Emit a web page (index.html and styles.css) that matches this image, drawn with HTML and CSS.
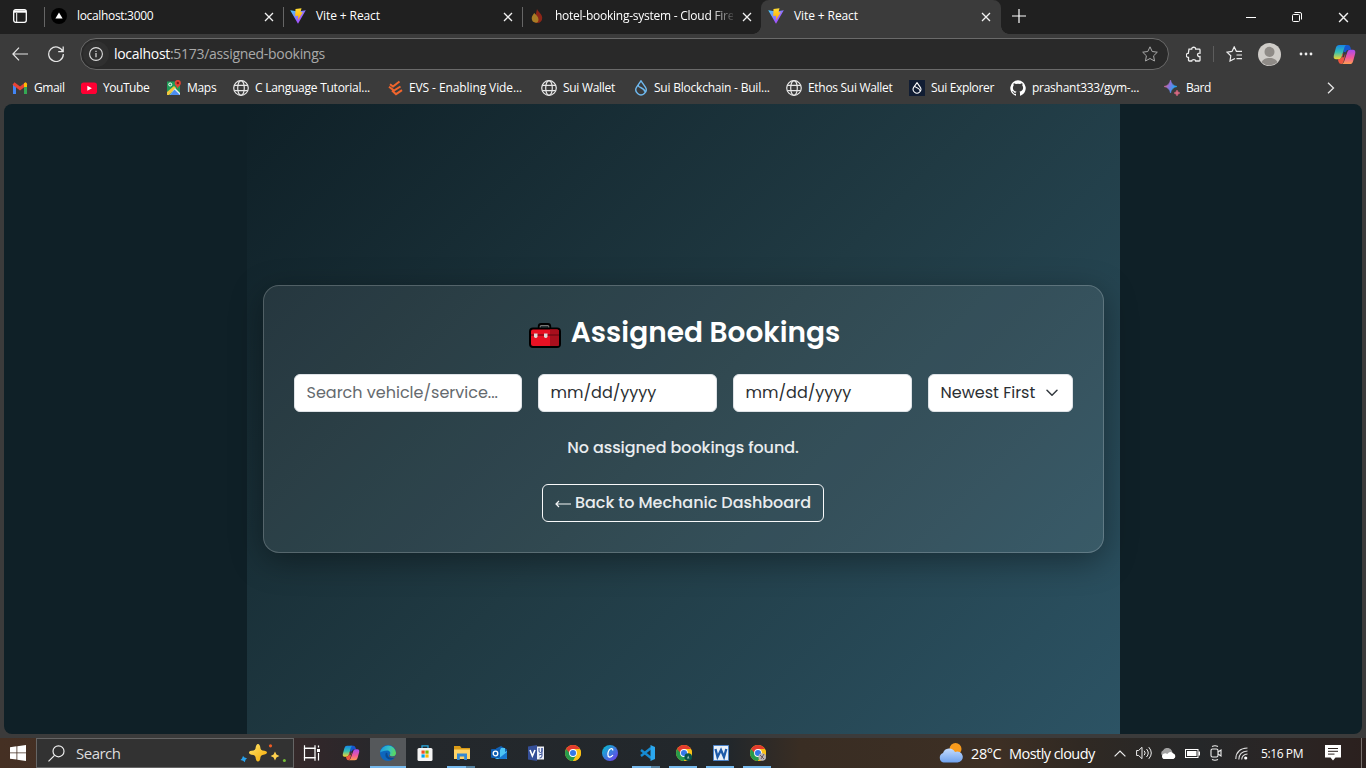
FILE: index.html
```html
<!DOCTYPE html>
<html lang="en">
<head>
<meta charset="utf-8">
<title>Vite + React</title>
<link rel="stylesheet" href="styles.css">
</head>
<body>
<svg class="defs" aria-hidden="true">
  <defs>
    <linearGradient id="vp" x1="0" y1="0" x2="1" y2="1"><stop offset="0" stop-color="#41d1ff"/><stop offset=".6" stop-color="#9a60ff"/><stop offset="1" stop-color="#bd34fe"/></linearGradient>
    <linearGradient id="vy" x1="0" y1="0" x2="0" y2="1"><stop offset="0" stop-color="#ffdd35"/><stop offset="1" stop-color="#ffa800"/></linearGradient>
    <linearGradient id="cpl" x1="0" y1="0" x2="0" y2="1"><stop offset="0" stop-color="#1686e8"/><stop offset=".5" stop-color="#35c0b2"/><stop offset="1" stop-color="#f4d52e"/></linearGradient>
    <linearGradient id="cpr" x1="0" y1="0" x2="0" y2="1"><stop offset="0" stop-color="#a64bf0"/><stop offset=".55" stop-color="#f2589b"/><stop offset="1" stop-color="#ff9e50"/></linearGradient>
    <linearGradient id="edge" x1="0" y1="1" x2="1" y2="0"><stop offset="0" stop-color="#0c59a4"/><stop offset=".5" stop-color="#1ba0dd"/><stop offset="1" stop-color="#62dd55"/></linearGradient>
    <linearGradient id="edge2" x1="0" y1=".3" x2="1" y2=".5"><stop offset="0" stop-color="#1b98e0"/><stop offset=".55" stop-color="#35c1c4"/><stop offset="1" stop-color="#5fdb57"/></linearGradient>
    <linearGradient id="bard" x1="0" y1=".3" x2="1" y2=".7"><stop offset="0" stop-color="#e8637b"/><stop offset=".4" stop-color="#8a72dd"/><stop offset=".8" stop-color="#25a5f5"/></linearGradient>
    <linearGradient id="canva" x1="0" y1="0" x2="1" y2="1"><stop offset="0" stop-color="#00c4cc"/><stop offset="1" stop-color="#7434ee"/></linearGradient>
    <linearGradient id="cloud" x1="0" y1="0" x2="0" y2="1"><stop offset="0" stop-color="#c4dcff"/><stop offset="1" stop-color="#6fa2ee"/></linearGradient>
    <linearGradient id="star" x1="0" y1="0" x2="1" y2="1"><stop offset="0" stop-color="#ffe66e"/><stop offset="1" stop-color="#f5a800"/></linearGradient>
  </defs>
  <symbol id="vite" viewBox="0 0 16 16"><path fill="url(#vp)" d="M.2 2.200 8 15.800 15.800 2.200 8 3.600z"/><path fill="url(#vy)" d="M5.500 1 11.500.2 10.500 4.200h2.300L8 12l.2-4.300-3 .4z"/></symbol>
  <symbol id="x" viewBox="0 0 10 10"><path d="m1 1 8 8M9 1 1 9" fill="none" stroke="#f1f1f1" stroke-width="1.3"/></symbol>
  <symbol id="globe" viewBox="0 0 16 16"><g fill="none" stroke="#e6e6e6" stroke-width="1.2"><circle cx="8" cy="8" r="7.300"/><ellipse cx="8" cy="8" rx="3.300" ry="7.300"/><path d="M1.300 5.300h13.400M1.300 10.700h13.400"/></g></symbol>
  <symbol id="drop" viewBox="0 0 16 16"><path d="M8 .8 12.200 6.800a5.100 5.100 0 1 1-8.400 0zM5.100 5.300c.5 3 6.300 2 6.700 6.300" fill="none" stroke="currentColor" stroke-width="1.400"/></symbol>
  <symbol id="copilot" viewBox="0 0 24 22">
    <path fill="#1557d0" d="M11 1h4.500q2 0 2.700 2.300L19 6h-2q-3 0-3.800 2.500L11 14z"/>
    <path fill="url(#cpl)" d="M6.500 1H14q-1.500.5-2 2.500L9 13.500Q8.300 16 6 16H3.200Q0 16 .8 12L3 4q.8-3 3.500-3z"/>
    <path fill="#ee5540" d="M6 16q2.300 0 3-2.500l1-3.500 3 1-2 7.500q-.8 2.500-2.500 2.500-2 0-2.700-2.200L5 16z"/>
    <path fill="url(#cpr)" d="M18 6h2.800Q24 6 23.200 10L21 18q-.8 3-3.500 3H8.500q2.200 0 3-2.500L15 8.500Q15.700 6 18 6z"/>
    <path fill="#3b3b3b" d="M11.200 8.500h2L11.500 14H9.600z"/>
  </symbol>
  <symbol id="chrome" viewBox="0 0 16 16"><circle cx="8" cy="8" r="8" fill="#fbc116"/><path fill="#e33b2e" d="M1.100 4A8 8 0 0 1 14.900 4H8L4.500 9.900z"/><path fill="#279a4b" d="M1.100 4A8 8 0 0 0 8 16l3.500-6L8 8H4.500z"/><path fill="#fbc116" d="M14.930 4H8l3.500 6L8 16A8 8 0 0 0 14.930 4z"/><circle cx="8" cy="8" r="3.900" fill="#fff"/><circle cx="8" cy="8" r="3.050" fill="#3478e8"/></symbol>
</svg>

<div class="tabs">
  <div class="workspace"><svg width="14" height="14" viewBox="0 0 14 14"><rect x=".7" y=".7" width="12.600" height="12.600" rx="2" fill="none" stroke="#fff" stroke-width="1.300"/><path d="M1 2.500h12" stroke="#fff" stroke-width="2.400"/><path d="M3.700 4v9" stroke="#fff"/></svg></div>
  <div class="tab t1"><svg width="16" height="16" viewBox="0 0 16 16"><circle cx="8" cy="8" r="8"/><path fill="#fff" d="m8 4.400 3.600 6.200H4.400z"/></svg><span class="tt">localhost:3000</span><svg class="close"><use href="#x"/></svg></div>
  <div class="tab t2"><svg width="16" height="16"><use href="#vite"/></svg><span class="tt">Vite + React</span><svg class="close"><use href="#x"/></svg></div>
  <div class="tab t3"><svg width="16" height="16" viewBox="0 0 16 16"><path fill="#8c2618" d="M8 1c1 3 5 5 5.200 8.500A5 5 0 0 1 8 15c-3-.4-4-3-2.400-5.500C6.800 7 7.200 4.500 8 1z"/><path fill="#a97c25" d="M5.200 5c2 2 4.300 3.500 4.300 6.500 0 2-1 3.300-2.500 3.300a4.600 4.600 0 0 1-4.300-4.500C2.700 8 4.200 7 5.200 5z"/></svg><span class="tt fade">hotel-booking-system - Cloud Fire</span><svg class="close"><use href="#x"/></svg></div>
  <div class="tab t4 active"><svg width="16" height="16"><use href="#vite"/></svg><span class="tt">Vite + React</span><svg class="close"><use href="#x"/></svg></div>
  <svg class="plus" viewBox="0 0 14 14"><path d="M7 0v14M0 7h14" stroke="#fff" stroke-width="1.200"/></svg>
  <div class="win">
    <svg width="10" height="12" viewBox="0 0 10 12"><path d="M0 6.500h10" stroke="#fff"/></svg>
    <svg width="10" height="10" viewBox="0 0 10 10"><g fill="none" stroke="#fff"><rect x=".5" y="2.500" width="7" height="7" rx="1"/><path d="M2.500.5H8q1.500 0 1.500 1.500v5.500"/></g></svg>
    <svg width="11" height="11"><use href="#x"/></svg>
  </div>
</div>

<div class="toolbar">
  <svg class="back" viewBox="0 0 16 14"><path d="M16 7H1M7 .7.900 7 7 13.300" fill="none" stroke="#e6e6e6" stroke-width="1.200"/></svg>
  <svg class="reload" viewBox="0 0 16 16"><path d="M14.800 5.500A7.300 7.300 0 1 0 15.300 8M15.200.6v5h-5" fill="none" stroke="#e6e6e6" stroke-width="1.250"/></svg>
  <div class="address">
    <span class="info"><svg width="14" height="14" viewBox="0 0 14 14"><circle cx="7" cy="7" r="6.400" fill="none" stroke="#ddd" stroke-width="1.100"/><path d="M7 6v4.200M7 3.700v1.300" stroke="#ddd" stroke-width="1.200"/></svg></span>
    <span class="url"><b>localhost</b>:5173/assigned-bookings</span>
    <svg class="fav" viewBox="0 0 16 16"><path d="m8 .8 2.200 4.700 5.100.7-3.700 3.600.9 5.200L8 12.500 3.500 15l.9-5.200L.7 6.200l5.100-.7z" fill="none" stroke="#aaa"/></svg>
  </div>
  <svg class="ext" viewBox="0 0 16 17"><path d="M3 3.200h2.700C5.400.6 10 .6 9.700 3.200h3.500q.8 0 .8.800v3.200c-3.300-.5-3.300 3.800 0 3.300v3.700q0 .8-.8.800H9.700c0-1.800-4-1.800-4 0H3.500q-1 0-1-.8v-2.700C-.4 11.800-.4 7 2.300 7.300z" fill="none" stroke="#eee" stroke-width="1.300"/></svg>
  <i class="sep"></i>
  <svg class="favs" viewBox="0 0 17 16"><path d="M9 12.500 4 15l.8-5.200L1 6.200l5-.8L8.200.9l2.200 4.400H16M10.500 9H16M10.500 12.600H16" fill="none" stroke="#eee" stroke-width="1.200"/></svg>
  <svg class="avatar" viewBox="0 0 22 22"><circle cx="11" cy="11" r="11" fill="#cfccc8"/><circle cx="11" cy="8.500" r="4.800" fill="#8f8b87"/><path d="M3.500 18.500C5 13 17 13 18.500 18.500A11 11 0 0 1 3.500 18.500z" fill="#8f8b87"/></svg>
  <svg class="dots" viewBox="0 0 14 4"><g fill="#eee"><circle cx="2" cy="2" r="1.400"/><circle cx="7" cy="2" r="1.400"/><circle cx="12" cy="2" r="1.400"/></g></svg>
  <svg class="cop"><use href="#copilot"/></svg>
</div>

<div class="bookmarks">
  <span class="bm b1"><svg viewBox="0 0 16 16"><path d="M2.500 14V4.500" stroke="#4285f4" stroke-width="3"/><path d="M13.500 14V4.500" stroke="#34a853" stroke-width="3"/><path d="m1.500 3.500 6.500 5 6.500-5" fill="none" stroke="#ea4335" stroke-width="3.200"/><path d="M12 5.500V3.200c1-1 3-.8 3 1V7H12z" fill="#fbbc04"/></svg>Gmail</span>
  <span class="bm b2"><svg viewBox="0 0 16 16"><rect y="2.500" width="16" height="11.500" rx="2.800" fill="#ff0033"/><path fill="#fff" d="m6.300 5.800 4.600 2.500-4.600 2.500z"/></svg>YouTube</span>
  <span class="bm b3"><svg viewBox="0 0 16 16"><path fill="#1e9b57" d="M1 1.500h13V15H1z"/><path fill="#f2c73d" d="M1 12 8 6l2 2-7 7H1z"/><path fill="#e7edf2" d="m9 8 5 5v2H4z"/><path fill="#4b8ef1" d="m8.500 9.500 5.500 5.500H4z"/><circle cx="4.200" cy="4.500" r="1.500" fill="none" stroke="#fff"/><path fill="#e04434" d="M11.700 9C11.500 6.500 8.700 5.600 8.700 3a3 3 0 0 1 6.200 0c0 2.600-3 3.500-3.200 6z"/><circle cx="11.800" cy="3" r="1.200" fill="#7b1713"/></svg>Maps</span>
  <span class="bm b4"><svg><use href="#globe"/></svg>C Language Tutorial...</span>
  <span class="bm b5"><svg viewBox="0 0 16 16"><path fill="none" stroke="#f1652d" stroke-width="2" d="M11.500 1.500 5 6.500 2 4.200M1 6.800 6 10.500l6.500-4M4 10.500l4 3.700 6-4"/></svg>EVS - Enabling Vide...</span>
  <span class="bm b6"><svg><use href="#globe"/></svg>Sui Wallet</span>
  <span class="bm b7 blue"><svg><use href="#drop"/></svg><em>Sui Blockchain - Buil...</em></span>
  <span class="bm b8"><svg><use href="#globe"/></svg>Ethos Sui Wallet</span>
  <span class="bm b9"><svg viewBox="0 0 16 16"><path fill="#111d33" d="M0 0h16v16H0z"/><use href="#drop" x="2" y="1.500" width="12" height="13"/></svg>Sui Explorer</span>
  <span class="bm b10"><svg viewBox="0 0 16 16"><path fill="#fff" d="M8 .2a8 8 0 0 0-2.500 15.500c.4 0 .5-.2.500-.4v-1.500c-2.200.5-2.700-1-2.700-1-.4-.9-.9-1.200-.9-1.200-.7-.5.1-.5.100-.5.800.1 1.200.8 1.200.8.700 1.200 1.900.9 2.300.7.100-.5.300-.9.500-1.100-1.800-.2-3.600-.9-3.600-4 0-.9.300-1.600.8-2.100-.1-.2-.4-1 .1-2.100 0 0 .7-.2 2.200.8a7.500 7.500 0 0 1 4 0c1.500-1 2.200-.8 2.200-.8.500 1.100.2 1.900.1 2.100.5.500.8 1.200.8 2.100 0 3.100-1.900 3.800-3.700 4 .3.300.6.800.6 1.500v2.300c0 .2.100.5.500.4A8 8 0 0 0 8 .2z"/></svg>prashant333/gym-...</span>
  <span class="bm b11"><svg viewBox="0 0 16 16"><path fill="url(#bard)" d="M6.500 0q1 5.500 6.500 6.500-5.500 1-6.500 6.500Q5.500 7.500 0 6.500 5.500 5.500 6.500 0z" stroke="url(#bard)" stroke-width=".6"/><path fill="#d86882" stroke="#d86882" stroke-width=".5" d="M13 10q.6 2.400 3 3-2.400.6-3 3-.6-2.400-3-3 2.400-.6 3-3z"/></svg>Bard</span>
  <svg class="more" viewBox="0 0 8 12"><path d="m1 .7 5.500 5.300L1 11.300" fill="none" stroke="#e6e6e6" stroke-width="1.300"/></svg>
</div>

<main class="viewport">
  <div class="page">
    <section class="card">
      <h2><svg width="32" height="25" viewBox="0 0 32 25"><path d="M10.500 6V3.500q0-1.700 1.700-1.700h6.600q1.700 0 1.700 1.700V6" fill="none" stroke="#000" stroke-width="3.400"/><path d="M11.200 6V3.700q0-1 1-1h6.600q1 0 1 1V6" fill="none" stroke="#777" stroke-width="1.200"/><rect x="1" y="5.500" width="30" height="18.500" rx="3" fill="#e81123" stroke="#000" stroke-width="2"/><path fill="#a90f1d" d="M21 6.500h7.500q1.500 0 1.500 1.500v13.500q0 1.500-1.500 1.500H21z"/><path d="M2 12h28" stroke="#5e0710"/><path fill="#ddd" d="M5 10.500h3.500v3.500q-1.700 2-3.500 0zM15 10.500h3.500v3.500q-1.700 2-3.500 0z"/></svg><span>Assigned Bookings</span></h2>
      <div class="filters">
        <div class="field search"><span>Search vehicle/service...</span></div>
        <div class="field date"><span>mm/dd/yyyy</span></div>
        <div class="field date"><span>mm/dd/yyyy</span></div>
        <div class="field select"><span>Newest First</span><svg width="12" height="8" viewBox="0 0 12 8"><path d="m1 1.300 5 5 5-5" fill="none" stroke="#343a40" stroke-width="1.500" stroke-linecap="round" stroke-linejoin="round"/></svg></div>
      </div>
      <p class="empty">No assigned bookings found.</p>
      <a class="btn"><svg width="16" height="8" viewBox="0 0 16 8"><path d="M16 4H1M4 1 1 4l3 3" fill="none" stroke="#f3f5f6" stroke-width="1.200"/></svg><span>Back to Mechanic Dashboard</span></a>
    </section>
  </div>
</main>

<footer class="taskbar">
  <div class="start"><svg width="16" height="16" viewBox="0 0 16 16"><path fill="#fff" d="M0 2.200 6.500 1.300v6.200H0zM7.300 1.200 16 0v7.500H7.300zM0 8.300h6.500v6.300L0 13.700zM7.300 8.300H16V16l-8.700-1.200z"/></svg></div>
  <div class="search-box">
    <svg width="17" height="17" viewBox="0 0 17 17"><circle cx="10.500" cy="6.300" r="5.500" fill="none" stroke="#eee" stroke-width="1.200"/><path d="m6.500 10.300-6 6" stroke="#eee" stroke-width="1.200"/></svg>
    <span>Search</span>
    <svg class="sparkle" width="46" height="19" viewBox="0 0 46 19"><path fill="url(#star)" d="M18 0q2 0 2.500 4.500.3 1.500 2 2Q27 7 27 8.500T22.500 11q-1.700.500-2 2Q20 17.500 18 17.500T15.500 13q-.3-1.500-2-2Q9 10.500 9 8.500t4.500-2q1.700-.5 2-2Q16 0 18 0z"/><path fill="#ffd04d" d="m35 7.500 1.400 3 3 1.500-3 1.400-1.400 3-1.400-3-3-1.400 3-1.500z"/><path fill="#28a3ee" d="m3 12 1.500 1.500 2.500.8-1.500 1.500-.7 2.400-1.700-1.500-2.600-.6 1.500-1.500z"/><circle cx="30.500" cy="1.800" r="1.600" fill="#f05b24"/><circle cx="44.400" cy="16.500" r="1.500" fill="#75bf35"/></svg>
  </div>
  <div class="apps">
    <div class="taskview"><svg viewBox="0 0 18 16"><g fill="none" stroke="#fff" stroke-width="1.200"><path d="M1.500.3v3H12v-3M1.500 15.700v-3H12v3"/><rect x="1.500" y="3.300" width="10.500" height="9.400"/><path d="M15.500.5v2M15.500 8v7.500"/></g><rect x="14" y="4" width="3" height="3" fill="#fff"/></svg></div>
    <div><svg viewBox="0 0 18 16"><use href="#copilot"/></svg></div>
    <div class="current run"><svg viewBox="0 0 16 16"><circle cx="8" cy="8" r="8" fill="#0e66bd"/><path fill="url(#edge2)" d="M.1 7.500A8 8 0 0 1 16 8c0 2.500-2 3.500-4 3.500-2.300 0-3-1-2-2.300 1-1.700-.5-3.700-3-3.700-3 0-5.500 1-6.900 2z"/><path fill="#0b4a92" d="M6 7.500c-1.500 3 0 6.500 4 7 2 0 3.500-.6 4.700-2-4 1.300-7.700-.5-7.200-4z"/><path fill="#55585b" d="M9.900 9.300c-.5 1.200.5 2.300 2.300 2.300 1.500 0 2.800-.4 3.800-1.600l-.4 2c-1.600 1.100-6.300 1.300-6.700-1.200 0-.7.500-1.300 1-1.500z"/></svg></div>
    <div><svg viewBox="0 0 16 16"><path d="M5 4V.8h6V4" fill="none" stroke="#28a9e0" stroke-width="1.300"/><rect x=".5" y="3" width="15" height="13" rx="1.500" fill="#f4f4f4"/><path fill="#f25022" d="M4.500 5.500h3.200v3.200H4.500z"/><path fill="#7fba00" d="M8.400 5.500h3.200v3.200H8.400z"/><path fill="#00a4ef" d="M4.500 9.400h3.200v3.200H4.500z"/><path fill="#ffb900" d="M8.400 9.400h3.200v3.200H8.400z"/></svg></div>
    <div class="run multi"><svg viewBox="0 0 16 16"><path fill="#d99a16" d="M0 1h6l1.500 2H16v4H0z"/><path fill="#ffd467" d="M0 4.500h16V14H0z"/><path fill="#3489d2" d="M3 8.500h10V15h-2.800v-3.500H5.800V15H3z"/></svg></div>
    <div><svg viewBox="0 0 16 16"><path fill="#1262b4" d="M5 3.500 10 1l6 3.500V14H4z"/><path fill="#4cc4f4" d="M10 3h4v4l2-1v8H5z"/><path fill="#1777cf" d="m16 7-9 7h8q1 0 1-1z"/><rect y="4" width="9" height="9" rx="1" fill="#0f5db0"/><circle cx="4.500" cy="8.500" r="2.300" fill="none" stroke="#fff" stroke-width="1.300"/></svg></div>
    <div><svg viewBox="0 0 16 16"><path fill="#eef0f8" d="M8 1.500h8v13H8z"/><path fill="#354f98" d="M0 1.500 9 0v16l-9-1.500z"/><path d="m2 5 2.400 6L7 5" fill="none" stroke="#fff" stroke-width="1.600"/><path d="M11 3v3q0 1.500 1.500 1.500T14 6V3v8q0 2-2.500 2M11 10l3-1" fill="none" stroke="#354f98"/></svg></div>
    <div><svg><use href="#chrome"/></svg></div>
    <div><svg viewBox="0 0 16 16"><circle cx="8" cy="8" r="8" fill="url(#canva)"/><path d="M10.800 5.500C11 3 8.700 3 7.200 5c-1.600 2.300-2 6.500.2 7 1.500.3 2.700-.8 3.500-2" fill="none" stroke="#fff" stroke-width="1.300"/></svg></div>
    <div class="run multi"><svg viewBox="0 0 16 16"><path d="m12 3-10 8M2 5l10 8" stroke="#168bd2" stroke-width="2.400"/><path fill="#2ba7ee" d="m11.500 0 4.500 2v12l-4.500 2z"/></svg></div>
    <div class="run"><svg viewBox="0 0 16 16"><use href="#chrome"/><circle cx="12.200" cy="12" r="3.800" fill="#075449"/><path d="m12.200 10.500 1.300 3h-2.600z" fill="#8fb9ae"/></svg></div>
    <div class="run"><svg viewBox="0 0 16 16"><path fill="#e8f0fa" stroke="#4c83c8" d="M.5.5h15v15H.5z"/><path d="m2.500 4 2 8L8 5l3 7 2.300-8" fill="none" stroke="#1e5aa8" stroke-width="2.300"/></svg></div>
    <div class="run"><svg viewBox="0 0 16 16"><use href="#chrome"/><circle cx="12.200" cy="12" r="3.800" fill="#bbb4b5"/><path d="m10 10 4 4m-3 0 3-5" stroke="#6b5960"/></svg></div>
  </div>
  <div class="tray">
    <svg class="weather" viewBox="0 0 24 20"><circle cx="17" cy="6" r="6" fill="#f79a1c"/><path fill="url(#cloud)" d="M5 19.500a5 5 0 0 1-.5-9.500A6.500 6.500 0 0 1 16.500 9a5.500 5.500 0 1 1 2.500 10.500z"/></svg>
    <span class="temp">28°C</span><span class="cond">Mostly cloudy</span>
    <svg class="up" viewBox="0 0 12 7"><path d="m.6 6.400 5.400-5.400 5.400 5.400" fill="none" stroke="#eee" stroke-width="1.200"/></svg>
    <svg class="vol" viewBox="0 0 17 14"><path d="M.6 4.500h2L6 1.300v11.400L2.600 9.500h-2zM8.200 4.800q2 2.200 0 4.400M10.500 3q3.500 4 0 8M12.800 1.200q5 5.800 0 11.600" fill="none" stroke="#eee"/></svg>
    <svg class="one" viewBox="0 0 16 11"><path fill="#a2a2a2" d="M3 8a3 3 0 0 1 0-5.500A5 5 0 0 1 12 3l1 4z"/><path fill="#fff" d="M3.500 11a3 3 0 0 1 0-5.200q2-1 3.800.2Q10 2.500 13 5.300a3 3 0 0 1 .5 5.700z"/></svg>
    <svg class="bat" viewBox="0 0 15 9"><rect x=".5" y=".5" width="12.500" height="8" fill="none" stroke="#fff"/><path fill="#fff" d="M2 2h9.500v5H2zM13.500 2.500H15v4h-1.500z"/></svg>
    <svg class="cam" viewBox="0 0 12 16"><g fill="none" stroke="#eee" stroke-width="1.100"><rect x="1" y="4" width="7" height="8" rx="1.500"/><path d="m8 7 3-2v6L8 9M2 1.500q3-1.500 6 0M2 14.500q3 1.500 6 0"/></g></svg>
    <svg class="wifi" viewBox="0 0 13 13"><g fill="none" stroke="#ddd" stroke-width="1.100"><path d="M.8 12Q1 1.500 12.500 1M3.800 12.500Q4 4.500 12.500 4M6.700 12.500Q7 7.500 12.500 7"/></g><circle cx="10.700" cy="11" r="1.600" fill="#fff"/></svg>
    <span class="clock">5:16 PM</span>
    <svg class="note" viewBox="0 0 16 16"><path fill="#fff" d="M0 0h16v12.500h-5.500L8 15.500l-2.500-3H0z"/><path d="M3 3.500h10M3 6.300h10M3 9.100h6.500" stroke="#2b221e"/></svg>
    <i class="desk"></i>
  </div>
</footer>
</body>
</html>
```

FILE: styles.css
```css
* { box-sizing: border-box; }
body { margin: 0; width: 1366px; height: 768px; overflow: hidden; display: flex; flex-direction: column; background: #3b3b3b; color: #fff; font: 12px "Open Sans", "Noto Sans", sans-serif; }
svg { display: block; flex: none; }
.defs { position: absolute; width: 0; height: 0; }

.tabs { height: 34px; flex: none; display: flex; background: #202020; }
.workspace { width: 44px; padding: 9px 0 0 13px; }
.tab { display: flex; height: 34px; padding-top: 8px; position: relative; }
.tab::before { content: ""; position: absolute; left: 0; top: 7px; width: 1px; height: 20px; background: #666; }
.tab.active::before { display: none; }
.t1, .t2, .t3 { width: 239px; padding-left: 7px; }
.t4 { width: 240px; padding-left: 7px; }
.t1 .tt { letter-spacing: -.33px; }
.t2 .tt, .t4 .tt { letter-spacing: -.1px; }
.tab.active { background: #3b3b3b; border-radius: 8px 8px 0 0; }
.tab.active::after { content: ""; position: absolute; left: -8px; right: -8px; bottom: 0; height: 8px; background: radial-gradient(circle at 0 0, transparent 7.500px, #3b3b3b 8px) left / 8px 8px no-repeat, radial-gradient(circle at 100% 0, transparent 7.500px, #3b3b3b 8px) right / 8px 8px no-repeat; }
.tt { margin-left: 10px; width: 178px; line-height: 16px; white-space: nowrap; letter-spacing: -.25px; }
.fade { -webkit-mask-image: linear-gradient(90deg, #000 155px, transparent 182px); mask-image: linear-gradient(90deg, #000 155px, transparent 182px); }
.close { width: 10px; height: 10px; margin: 4px 0 0 8.500px; }
.plus { width: 14px; height: 14px; margin: 9px 0 0 10.500px; }
.win { margin-left: auto; display: flex; align-items: center; gap: 36px; padding-right: 17px; }

.toolbar { height: 39px; flex: none; display: flex; align-items: center; padding: 1px 0 0 12px; }
.back { width: 16px; height: 14px; }
.reload { width: 16px; height: 16px; margin-left: 20px; }
.address { width: 1089px; height: 32px; margin-left: 16px; padding: 0 10px 0 2px; display: flex; align-items: center; border: 1px solid #6a6a6a; border-radius: 16px; background: #292929; }
.info { width: 26px; height: 26px; border-radius: 13px; background: #303030; display: grid; place-items: center; }
.url { margin-left: 5px; font-size: 14px; color: #a9a9a9; letter-spacing: -.3px; line-height: 20px; }
.url b { font-weight: 400; color: #fff; }
.fav { width: 16px; height: 16px; margin-left: auto; }
.ext { width: 16px; height: 17px; margin-left: 17px; }
.sep { width: 1px; height: 16px; background: #5d5d5d; margin-left: 11px; }
.favs { width: 17px; height: 16px; margin-left: 12px; }
.avatar { width: 23px; height: 23px; margin-left: 15px; }
.dots { width: 14px; height: 4px; margin-left: 18px; }
.cop { width: 23px; height: 21px; margin-left: 20px; }

.bookmarks { height: 31px; flex: none; display: flex; align-items: center; padding: 0 0 1px 12px; }
.bm { display: flex; align-items: center; gap: 6px; line-height: 16px; white-space: nowrap; letter-spacing: -.3px; }
.bm svg { width: 16px; height: 16px; }
.bm em { font-style: normal; color: #fff; }
.blue { color: #6fb9ef; }
.b1 { width: 69px; letter-spacing: -.4px; } .b2 { width: 85px; letter-spacing: -.45px; } .b3 { width: 67px; gap: 5px; } .b4 { width: 155px; letter-spacing: -.25px; }
.b5 { width: 153px; gap: 5px; letter-spacing: -.1px; } .b6 { width: 92px; } .b7 { width: 153px; gap: 5px; letter-spacing: -.22px; } .b8 { width: 123px; }
.b9 { width: 101px; letter-spacing: -.35px; } .b10 { width: 154px; letter-spacing: -.27px; } .b11 { letter-spacing: -.4px; }
.more { width: 8px; height: 12px; margin-left: auto; margin-right: 31px; }

.viewport { height: 630px; flex: none; margin: 0 4px; padding-left: 243px; border-radius: 8px; overflow: hidden; background: #0f2027; font-family: Poppins, Inter, sans-serif; }
.page { width: 873px; height: 630px; padding: 181px 16px 0; background: linear-gradient(135deg, #0f2027, #203a43, #2c5364); }
.card { width: 841px; height: 268px; padding: 28px 30px 0 29px; display: flex; flex-direction: column; align-items: center; border: 1px solid rgba(255,255,255,.2); border-radius: 16px; background: rgba(255,255,255,.08); box-shadow: 0 8px 32px rgba(0,0,0,.37); }
h2 { margin: 0 0 0 3px; height: 36px; display: flex; align-items: center; gap: 10px; font-size: 28px; font-weight: 600; line-height: 36px; white-space: nowrap; }
h2 span { margin-top: 2px; }
h2 svg { margin-top: 7px; }
.filters { width: 779px; display: grid; grid-template-columns: 228px 179px 179px 145px; gap: 16px; margin: 24px 0 0 1px; }
.field { height: 38px; border: 1px solid #dee2e6; border-radius: 6px; background: #fff; color: #2b2f33; padding: 0 11.500px; display: flex; align-items: center; font-size: 16px; line-height: 24px; white-space: nowrap; }
.search { color: #656a6e; }
.select { padding-right: 14px; justify-content: space-between; }
.empty { margin: 24px 0 0; height: 24px; font-size: 16px; font-weight: 500; line-height: 24px; letter-spacing: -.07px; color: #e9ecee; }
.btn { width: 282px; height: 38px; margin-top: 24px; padding-bottom: 1px; border: 1px solid #f8f9fa; border-radius: 6px; display: flex; align-items: center; justify-content: center; gap: 4px; font-size: 16px; font-weight: 500; letter-spacing: -.04px; color: #e9ecee; white-space: nowrap; }
.btn svg { margin-top: 3px; }

.taskbar { height: 30px; flex: none; margin-top: 4px; display: flex; background: linear-gradient(90deg, #453023 0, #402e29 240px, #30272a 320px, #24282c 400px, #22272b 730px, #392d23 800px, #3d2f24 1000px, #302923 1080px, #252729 1200px, #2b2524 1290px, #2b201e 100%); }
.start { width: 36px; padding: 7px 0 0 10px; }
.search-box { width: 258px; border: 1px solid #656565; background: #323232; display: flex; align-items: center; padding: 0 7px 0 11px; font-size: 15px; color: #ddd; }
.search-box span { margin-left: 11px; letter-spacing: -.5px; }
.sparkle { margin-left: auto; }
.apps { width: 481px; margin-left: 1px; display: grid; grid-template-columns: repeat(13, 37px); }
.apps > div { display: grid; place-items: center; position: relative; }
.apps svg { width: 18px; height: 16px; }
.apps .taskview { padding-right: 4px; }
.current { background: #55585b; margin-left: 1px; }
.run::after { content: ""; position: absolute; left: 4px; right: 5px; bottom: 0; height: 2px; background: #76b9ed; }
.current::after { left: 0; right: 0; }
.multi::after { background: linear-gradient(90deg, #76b9ed 68%, #55819f 68%); }
.tray { flex: 1; display: flex; align-items: center; padding-left: 162px; white-space: nowrap; }
.weather { width: 25px; height: 20px; }
.temp { margin-left: 8px; width: 38px; font-size: 14.500px; letter-spacing: -.4px; }
.cond { width: 105px; font-size: 14.500px; letter-spacing: -.55px; }
.up { width: 12px; height: 7px; }
.vol { width: 17px; height: 14px; margin-left: 10px; }
.one { width: 16px; height: 11px; margin-left: 7px; }
.bat { width: 15px; height: 9px; margin-left: 9px; }
.cam { width: 12px; height: 16px; margin-left: 10px; }
.wifi { width: 13px; height: 13px; margin-left: 13px; }
.clock { width: 64px; margin-left: 13px; letter-spacing: -.4px; }
.note { width: 16px; height: 16px; }
.desk { width: 1px; height: 30px; margin-left: 20px; background: #77706d; }
```
